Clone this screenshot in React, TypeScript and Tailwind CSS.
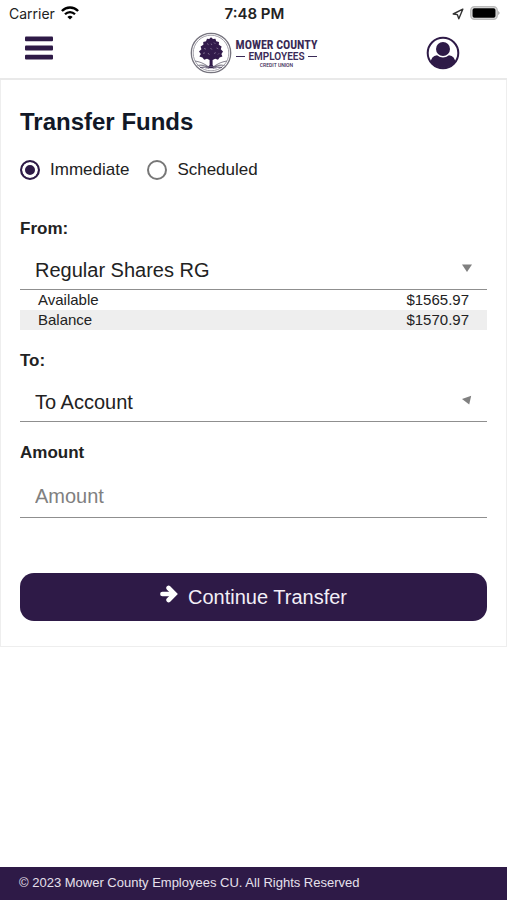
import { useState } from 'react';

const accounts = ['Regular Shares RG'];

const balances = [
  { label: 'Available', amount: '$1565.97' },
  { label: 'Balance', amount: '$1570.97' },
];

function StatusBar() {
  return (
    <div className="grid grid-cols-3 items-center h-7 pl-[9px] pr-[7px] font-['Inter',sans-serif] text-sm text-[#222]">
      <div className="flex items-center gap-[6px]">
        <span>Carrier</span>
        <svg viewBox="0 0 18 14" className="w-[18px] h-[14px] mb-[2px] text-black" fill="none" stroke="currentColor" aria-hidden="true">
          <path d="M0.9 5 C5.5 0.3 12.5 0.3 17.1 5" strokeWidth="2.4" />
          <path d="M4 8.2 C6.8 5.3 11.2 5.3 14 8.2" strokeWidth="2.3" />
          <path d="M6.4 10.9 C7.9 9.4 10.1 9.4 11.6 10.9 L9 13.6 Z" fill="currentColor" stroke="none" />
        </svg>
      </div>
      <span className="text-center text-[15px] font-semibold">7:48 PM</span>
      <div className="flex items-center justify-end gap-[6px]">
        <svg viewBox="0 0 12 12" className="w-3 h-3" fill="none" stroke="#333" strokeWidth="1.4" strokeLinejoin="round" aria-hidden="true">
          <path d="M10.8 1.2 L1.2 6 L5.3 6.6 L6.8 10.8 Z" />
        </svg>
        <svg viewBox="0 0 30 14" className="w-[30px] h-[14px] mb-[2px]" aria-hidden="true">
          <rect x="0.8" y="0.8" width="26.4" height="12.4" rx="3.6" fill="#e9e9e9" stroke="#bbb" strokeWidth="1.5" />
          <rect x="2.5" y="2.3" width="23" height="9.4" rx="1.8" fill="#000" />
          <path d="M28.2 4.7 L29.8 7 L28.2 9.3 Z" fill="#a5a5a5" />
        </svg>
      </div>
    </div>
  );
}

function TreeMark() {
  return (
    <svg viewBox="0 0 42 42" className="w-[42px] h-[42px]" fill="none" aria-hidden="true">
      <circle cx="21" cy="21" r="19.7" stroke="#77757f" strokeWidth="1.3" />
      <circle cx="21" cy="21" r="17.8" stroke="#a3a1aa" strokeWidth="1" />
      <path
        d="M21 5.2 L23 7 L25.4 6.8 L26.2 9.2 L29 10 L28.8 12.8 L31.6 14.6 L30.8 17.2 L33 19.6 L31.4 22 L32.4 24.4 L29.6 25.6 L28 27.8 L25.2 26.8 L22.6 28 L22.6 33 Q23.6 35.4 27 36.2 L15 36.2 Q18.6 35.4 19.6 33 L19.6 28 L17 26.8 L14.2 27.8 L12.4 25.6 L9.4 24.6 L10.8 22 L9 19.6 L11.4 17.2 L10.6 14.6 L13.4 12.8 L13.2 10 L16 9.2 L17 6.8 L19.2 7 Z"
        fill="#321b4b"
      />
      <path
        d="M17 11.5 l1.6 1.2 M24 10.5 l1.4 1.4 M14 16.4 l2 .8 M20.5 16 l1.4 1.6 M26.5 16 l1.8 .8 M13 21.4 l2 -.6 M18 21 l1.4 1.8 M24 21.6 l1.8 -1 M29 21.4 l-1 1 M21.2 11.6 l.6 1.4"
        stroke="#a79db4"
        strokeWidth="0.6"
      />
      <path d="M5 29 Q12 29.8 18.5 35 M37 29 Q30 29.8 23.5 35 M7.5 33.5 Q14 32 19 36.5 M34.5 33.5 Q28 32 23 36.5" stroke="#8a8793" strokeWidth="1.2" />
      <path d="M10 35.5 Q21 33.6 32 35.5" stroke="#5d5470" strokeWidth="1" />
    </svg>
  );
}

function Logo() {
  return (
    <a href="#" aria-label="Mower County Employees Credit Union" className="flex items-center gap-1 text-[#3a2a56]">
      <TreeMark />
      <span className="flex flex-col items-center font-['Roboto',sans-serif] whitespace-nowrap">
        <span className="font-['Liberation_Sans_Narrow','Roboto_Condensed','Roboto',sans-serif] text-xs leading-3 font-bold">MOWER COUNTY</span>
        <span className="flex items-center gap-[3px] w-full text-[10px] leading-[11px] font-semibold">
          <span className="h-px flex-1 bg-[#3a2a56]" />
          EMPLOYEES
          <span className="h-px flex-1 bg-[#3a2a56]" />
        </span>
        <span className="text-[5px] leading-[6px] font-medium">CREDIT UNION</span>
      </span>
    </a>
  );
}

function Header() {
  return (
    <header className="grid grid-cols-[1fr_auto_1fr] items-center h-[52px] px-[25px] border-b-2 border-[#e9e9e9]">
      <button type="button" aria-label="Menu" className="justify-self-start pb-[10px]">
        <svg viewBox="0 0 28 24" className="w-7 h-6" fill="#2e1a47" aria-hidden="true">
          <rect y="0.5" width="28" height="4.8" rx="1" />
          <rect y="9.6" width="28" height="4.8" rx="1" />
          <rect y="18.7" width="28" height="4.8" rx="1" />
        </svg>
      </button>
      <Logo />
      <button type="button" aria-label="Profile" className="justify-self-end mr-[22px]">
        <svg viewBox="0 0 34 34" className="w-[34px] h-[34px]" aria-hidden="true">
          <defs>
            <clipPath id="face">
              <circle cx="17" cy="17" r="15" />
            </clipPath>
          </defs>
          <circle cx="17" cy="17" r="15.3" fill="#fff" stroke="#2e1a47" strokeWidth="2" />
          <g clipPath="url(#face)" fill="#2e1a47">
            <path d="M4.6 27 Q5 19.8 11 19.2 Q17 23.6 23 19.2 Q29 19.8 29.4 27 L27 34 L7 34 Z" />
            <circle cx="17" cy="13" r="7" />
          </g>
        </svg>
      </button>
    </header>
  );
}

function AccountSelect({ id, label, placeholder, open }: { id: string; label: string; placeholder?: string; open?: boolean }) {
  return (
    <div>
      <label htmlFor={id} className="block text-[17px] leading-6 font-bold">{label}</label>
      <div className="relative mt-[9px]">
        <select
          id={id}
          className="block w-full h-10 pl-[15px] pr-10 appearance-none bg-transparent border-b border-[#8f8f8f] rounded-none text-xl focus:outline-none"
        >
          {placeholder && <option>{placeholder}</option>}
          {accounts.map((a) => (
            <option key={a}>{a}</option>
          ))}
        </select>
        <svg viewBox="0 0 12 12" className="absolute right-[14px] top-3 w-3 h-3 pointer-events-none" fill="#808080" aria-hidden="true">
          {open ? <path d="M1 5 L10.2 1.8 L8.2 10.4 Z" /> : <path d="M1 2.4 L11 2.4 L6 10 Z" />}
        </svg>
      </div>
    </div>
  );
}

export default function App() {
  const [when, setWhen] = useState('Immediate');
  const [amount, setAmount] = useState('');

  return (
    <div className="min-h-screen flex flex-col bg-white font-['Liberation_Sans',Arial,sans-serif] text-[#222]">
      <StatusBar />
      <Header />

      <main className="flex-1">
        <form onSubmit={(e) => e.preventDefault()} className="px-[19px] pt-[26px] pb-[25px] border border-t-0 border-[#eee]">
          <h1 className="text-2xl leading-8 font-bold text-[#111827]">Transfer Funds</h1>

          <div className="flex gap-[18px] mt-[22px]">
            {['Immediate', 'Scheduled'].map((opt) => (
              <label key={opt} className="flex items-center gap-[10px] text-[17px] leading-5">
                <input
                  type="radio"
                  name="when"
                  value={opt}
                  checked={when === opt}
                  onChange={() => setWhen(opt)}
                  className="appearance-none w-5 h-5 rounded-full border-2 border-[#777] checked:border-[#2e1a47] checked:bg-[#2e1a47] checked:shadow-[inset_0_0_0_3px_white]"
                />
                {opt}
              </label>
            ))}
          </div>

          <div className="mt-[37px]">
            <AccountSelect id="from" label="From:" />
            <table className="w-full text-[15px] leading-5">
              <tbody>
                {balances.map((b) => (
                  <tr key={b.label} className="even:bg-[#eee]">
                    <td className="pl-[18px]">{b.label}</td>
                    <td className="pr-[18px] text-right">{b.amount}</td>
                  </tr>
                ))}
              </tbody>
            </table>
          </div>

          <div className="mt-[19px]">
            <AccountSelect id="to" label="To:" placeholder="To Account" open />
          </div>

          <div className="mt-[19px]">
            <label htmlFor="amount" className="block text-[17px] leading-6 font-bold">Amount</label>
            <input
              id="amount"
              value={amount}
              onChange={(e) => setAmount(e.target.value)}
              placeholder="Amount"
              className="block w-full h-10 mt-[13px] pb-[2px] px-[15px] border-b border-[#8f8f8f] text-xl placeholder:text-[#808080] focus:outline-none"
            />
          </div>

          <button type="submit" className="flex items-center justify-center gap-[10px] w-full h-12 mt-[55px] rounded-[14px] bg-[#2e1a47] text-xl text-[#f3eff7]">
            <svg viewBox="0 0 18 18" className="w-[18px] h-[18px] mb-[6px]" fill="none" stroke="#fff" strokeWidth="4.6" strokeLinecap="round" aria-hidden="true">
              <path d="M2.4 9 H13" />
              <path d="M8.6 3 L14.6 9 L8.6 15" strokeLinejoin="miter" />
            </svg>
            Continue Transfer
          </button>
        </form>
      </main>

      <footer className="px-[19px] pt-[6px] pb-[7px] bg-[#2e1a47] text-[13px] leading-5 text-[#e6e0ec]">
        © 2023 Mower County Employees CU. All Rights Reserved
      </footer>
    </div>
  );
}
